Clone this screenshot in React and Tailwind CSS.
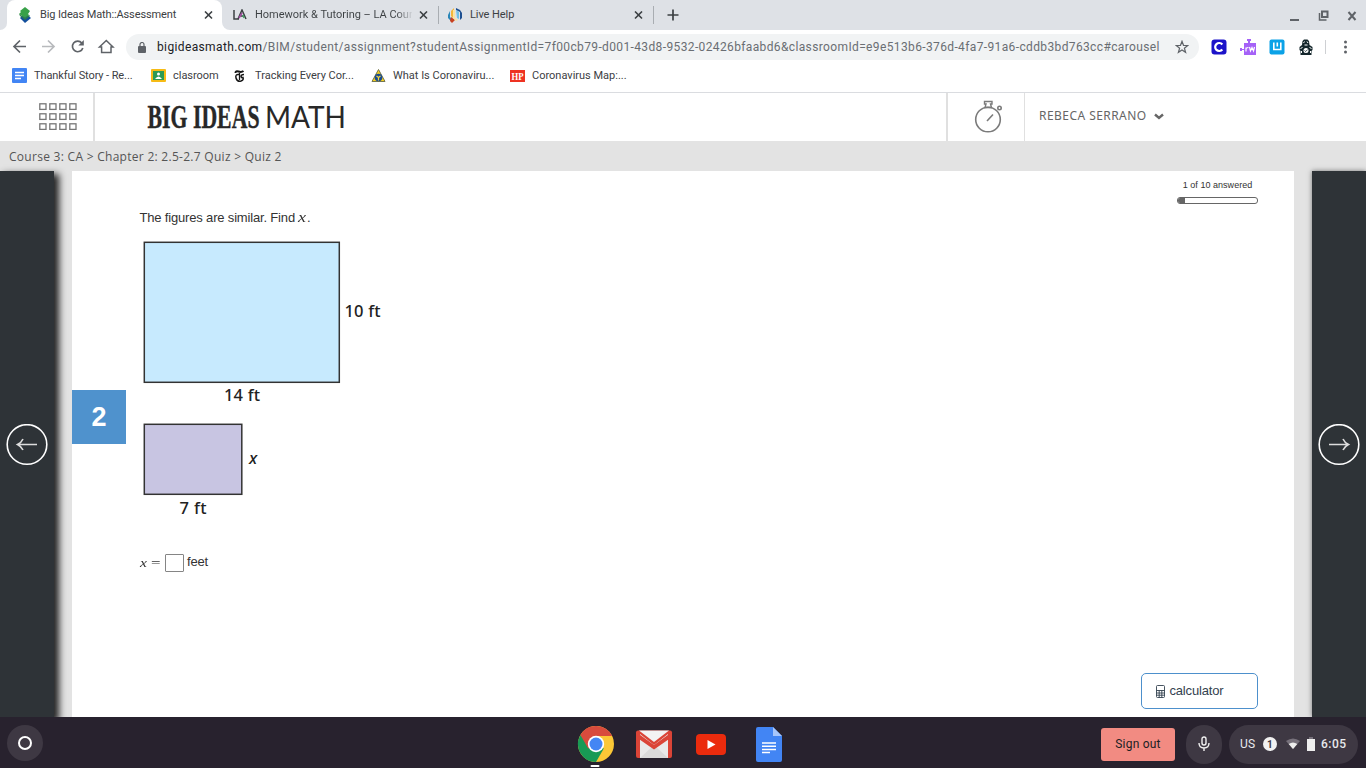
import React from "react";

const Close = ({ className = "" }) => (
  <svg className={"shrink-0 " + className} width="9" height="9" viewBox="0 0 9 9" stroke="#3c4043" strokeWidth="1.6">
    <path d="M1 .5l7 7M8 .5L1 7.500" />
  </svg>
);

const LiveIcon = () => (
  <svg width="14" height="15" viewBox="0 0 14 15" className="shrink-0">
    <path d="M3 3L6 0v3L5 10l-2-2z" fill="#f4b83c" />
    <path d="M2 3L0 7v3l3 3 1-1-2-3z" fill="#2a86b8" />
    <path d="M3 9l4 3-3 3-2-2z" fill="#c8401f" />
    <path d="M5 2h2v8l3 2-2 1-3-3z" fill="#fbe3a0" />
    <path d="M8 0l4 2 2 3v5l-2 2V4L8 2z" fill="#1d4f91" />
    <path d="M8 2l3 2v7L9 10z" fill="#6fc1e8" />
  </svg>
);

function TabStrip() {
  return (
    <div className="flex h-[30px] bg-[#dee1e6] text-[11px] text-[#3c4043]">
      <div className="flex w-[7px] bg-white"><div className="w-full rounded-br-lg bg-[#dee1e6]" /></div>
      <div className="w-[215px] bg-[#dee1e6]">
        <div className="flex h-full items-center rounded-t-lg bg-white pl-[11px]">
          <svg width="14" height="16" viewBox="0 0 14 16" className="shrink-0">
            <path d="M7 6l6 5-6 5-5-5z" fill="#134f9c" />
            <path d="M7 0l5 4-2 3 1 1-4 3-6-4 2-2-1-1z" fill="#38a148" />
            <path d="M1 7l6 4 4-3 1 1-5 4-5-4z" fill="#2c7c4c" />
          </svg>
          <div className="ml-2 w-[157px] whitespace-nowrap tracking-[-0.12px]">Big Ideas Math::Assessment</div>
          <Close className="ml-[7px]" />
        </div>
      </div>
      <div className="flex w-[217px] bg-white">
        <div className="flex w-full items-center rounded-bl-lg bg-[#dee1e6] pl-[11px]">
          <svg width="14" height="12" viewBox="0 0 14 12" fill="none" stroke="#3c4043" strokeWidth="1.5" className="shrink-0">
            <path d="M1 1v9h5" />
            <path d="M5 10l4-9 4 9M7 7h4" />
            <path d="M9 4l-3 5" stroke="#a14ca0" />
            <path d="M10 6l1 3" stroke="#46a567" />
          </svg>
          <div className="ml-2 w-[157px] overflow-hidden whitespace-nowrap bg-linear-to-r from-[#3c4043] from-90% to-[#3c4043]/10 bg-clip-text tracking-[-0.01px] text-transparent">Homework &amp; Tutoring – LA Coun</div>
          <Close className="ml-[7px]" />
          <div className="ml-[10px] h-[18px] w-px shrink-0 bg-[#a9adb2]" />
        </div>
      </div>
      <div className="flex w-[216px] items-center pl-[9px]">
        <LiveIcon />
        <div className="ml-2 w-[157px] tracking-[-0.08px]">Live Help</div>
        <Close className="ml-[7px]" />
        <div className="ml-[10px] h-[18px] w-px bg-[#a9adb2]" />
      </div>
      <div className="flex flex-1 items-center pl-[12px]">
        <svg width="12" height="12" viewBox="0 0 12 12" stroke="#3c4043" strokeWidth="1.7"><path d="M6 .5v11M.5 6h11" /></svg>
      </div>
      <div className="flex items-center pr-[8px] pt-px text-[#5f6368]">
        <svg width="68" height="12" viewBox="0 0 68 12" fill="none" stroke="#5f6368">
          <path d="M0 10h9" strokeWidth="2" />
          <path d="M32 1.500h5.500v5.500h-5.500z" strokeWidth="2" />
          <path d="M29.500 3v7h7" strokeWidth="1.500" />
          <path d="M58.500 2l7 8M65.500 2l-7 8" strokeWidth="2" />
        </svg>
      </div>
    </div>
  );
}

function Toolbar() {
  return (
    <div className="flex h-[34px] items-center">
      <svg width="106" height="16" viewBox="0 0 106 16" className="ml-[12px] shrink-0" fill="none" stroke="#5f6368" strokeWidth="1.7">
        <path d="M14 7.500H3M8 1.500l-6 6 6 6" />
        <path d="M30 7.500h11M36 1.500l6 6-6 6" stroke="#b8babd" />
        <path d="M69.800 4A5.300 5.300 0 1 0 70.800 9" />
        <path d="M71.800 1v5.500h-5.500z" fill="#5f6368" stroke="none" />
        <path d="M89.600 13.500V8H87.500L94.300 1.500 101 8h-2v5.500h-9.400z" strokeWidth="1.500" />
      </svg>
      <div className="ml-[8px] flex h-[26px] w-[1073px] shrink-0 items-center rounded-full bg-[#f1f3f4] pl-[12px]">
        <svg width="8" height="11" viewBox="0 0 8 11" className="shrink-0"><rect y="4" width="8" height="7" rx="1" fill="#5f6368" /><path d="M2 5V2.500a2 2 0 0 1 4 0V5" fill="none" stroke="#5f6368" strokeWidth="1.200" /></svg>
        <div className="ml-[11px] w-[1008px] whitespace-nowrap text-[12px] tracking-[0.37px] text-[#6a6e73]"><span className="text-[#202124]">bigideasmath.com</span>/BIM/student/assignment?studentAssignmentId=7f00cb79-d001-43d8-9532-02426bfaabd6&amp;classroomId=e9e513b6-376d-4fa7-91a6-cddb3bd763cc#carousel</div>
        <svg width="14" height="14" viewBox="0 0 14 14" className="ml-[10px] shrink-0" fill="none" stroke="#5f6368" strokeWidth="1.200"><path d="M7 1.300l1.500 4 4.200.2-3.300 2.700 1.200 4.100L7 10l-3.600 2.300 1.200-4.100-3.300-2.700 4.200-.2z" /></svg>
      </div>
      <svg width="150" height="18" viewBox="1206 38 150 18" className="ml-[7px] shrink-0">
        <rect x="1211.500" y="39.500" width="15" height="15" rx="3" fill="#1c13c9" />
        <path d="M1222.300 44.500a4 4 0 1 0 0 5" fill="none" stroke="#fff" strokeWidth="2.200" />
        <path d="M1244 43h4v-2h-1v-2h4v2h-1v2h6v12h-12v-5h-2v1h-2v-3h2v1h2z" fill="#a562f7" />
        <path d="M1246 51.500v-4M1246 48.500q1-1 2.500-1M1249.500 47l1 4 1.500-3.500 1.500 3.500 1-4" stroke="#fff" strokeWidth="1.200" fill="none" />
        <rect x="1269.500" y="39.500" width="15" height="15" rx="2" fill="#0ba2e7" />
        <path d="M1273.800 42.500v7h7v-7M1277.300 42.500v4" fill="none" stroke="#fff" strokeWidth="1.600" />
        <path d="M1302 45l.5-4 1.500-1.500h3.500l1.500 1.500.5 4 3 2v3l-1 1v4h-11v-4l-1-1v-3z" fill="#15272c" />
        <path d="M1303.500 43l1-1.500M1308 43l-1-1.500M1304.500 45h3M1300.500 49l2-2M1309.500 47l2 2M1301.500 51v2M1310.500 51v2" stroke="#fff" strokeWidth="1" />
        <circle cx="1306" cy="50.500" r="2.500" fill="#fff" />
        <path d="M1304.500 50.500l1.200 1 2-2" stroke="#15272c" fill="none" strokeWidth=".8" />
        <path d="M1325.500 40v14" stroke="#ced0d3" />
        <g fill="#5f6368"><circle cx="1345.500" cy="42" r="1.500" /><circle cx="1345.500" cy="47" r="1.500" /><circle cx="1345.500" cy="52" r="1.500" /></g>
      </svg>
    </div>
  );
}

function Bookmarks() {
  return (
    <div className="flex h-[29px] items-center border-b border-[#dadce0] pb-[5px] pl-[12px] text-[11px] text-[#3c4043] whitespace-nowrap">
      <div className="flex w-[139px] items-center gap-[7px]">
        <svg width="15" height="15" viewBox="0 0 15 15"><rect width="15" height="15" rx="1" fill="#4285f4" /><path d="M3 4.500h9M3 7.500h9M3 10.500h6" stroke="#fff" strokeWidth="1.300" /></svg>
        <span className="pt-px tracking-[-0.1px]">Thankful Story - Re...</span>
      </div>
      <div className="flex w-[82px] items-center gap-[7px]">
        <svg width="15" height="13" viewBox="0 0 15 13"><rect width="15" height="13" rx="1" fill="#f6bb15" /><rect x="2" y="2" width="11" height="9" fill="#2b9a55" /><circle cx="7.500" cy="5" r="1.500" fill="#fff" /><path d="M4 10q3.500-5 7 0z" fill="#fff" /></svg>
        <span className="pt-px tracking-[-0.02px]">clasroom</span>
      </div>
      <div className="flex w-[138px] items-center gap-[8px]">
        <svg width="14" height="14" viewBox="0 0 14 14" fill="none" stroke="#151515"><path d="M2.500 4q0-2.500 3-1.500t5-.5" strokeWidth="2" /><path d="M6 5.500Q2 5 3 9q1 4 5 3 3-1 2-3.500Q8.500 9 8 7.500 8 5.500 11 5.500" strokeWidth="1.500" /><path d="M6.500 4v7" strokeWidth="1.300" /></svg>
        <span className="pt-px">Tracking Every Cor...</span>
      </div>
      <div className="flex w-[139px] items-center gap-[7px]">
        <svg width="15" height="15" viewBox="0 0 15 15"><path d="M7.500 1.500l6.500 12H1z" fill="#f8cf1c" stroke="#747650" /><circle cx="7.500" cy="9.500" r="3.800" fill="#184a91" /><path d="M5.500 8l2 1.500 2-1.500M7.500 9.500v3" stroke="#f6d53b" strokeWidth="1.200" fill="none" /></svg>
        <span className="pt-px">What Is Coronaviru...</span>
      </div>
      <div className="flex items-center gap-[7px]">
        <svg width="15" height="12" viewBox="0 0 15 12"><rect width="15" height="12" fill="#ee3322" /><text x="1.500" y="9.500" fontFamily="Liberation Serif" fontWeight="700" fontSize="10.500" fill="#fff" textLength="12" lengthAdjust="spacingAndGlyphs">HP</text></svg>
        <span className="pt-px">Coronavirus Map:...</span>
      </div>
    </div>
  );
}

function SiteHeader() {
  const cols = [0, 1, 2, 3];
  return (
    <div className="flex h-[48px] bg-white">
      <div className="flex w-[95px] items-center border-r-2 border-[#e0e0e0] pb-px pl-[39px]">
        <svg width="38" height="27" viewBox="0 0 38 27" fill="none" stroke="#777" strokeWidth="1.300">
          {[0, 1, 2].map((r) => cols.map((c) => <rect key={r + "-" + c} x={c * 10 + 0.8} y={r * 10 + 0.8} width="6.200" height="5.600" />))}
        </svg>
      </div>
      <div className="flex flex-1 items-center pl-[52px]">
        <svg width="200" height="30" viewBox="0 0 200 30" fill="#282828">
          <text x="0.500" y="25.500" fontFamily="Liberation Serif" fontWeight="700" fontSize="33" stroke="#282828" strokeWidth=".4" textLength="112" lengthAdjust="spacingAndGlyphs">BIG IDEAS</text>
          <text x="118" y="25.500" fontFamily="Lato" fontSize="31" textLength="81" lengthAdjust="spacingAndGlyphs">MATH</text>
        </svg>
      </div>
      <div className="flex w-[79px] items-center border-r border-l-2 border-[#e0e0e0] pl-[26px]">
        <svg width="32" height="36" viewBox="0 0 32 36" fill="none" stroke="#7b7b7b" strokeWidth="1.600">
          <circle cx="14" cy="20.500" r="12.300" /><path d="M13 22l6-6.500" /><path d="M10.500 2.500h7.500v2.500h-1.500l1 3.500h-6.500l1-3.500h-1.500z" strokeWidth="1.400" /><circle cx="25.500" cy="9" r="1.700" />
        </svg>
      </div>
      <div className="flex w-[341px] items-center pl-[14px] text-[12px] text-[#666]">
        <span className="-mt-[2px] w-[108px] whitespace-nowrap font-['Noto_Sans'] tracking-[0.45px]">REBECA SERRANO</span>
        <svg width="10" height="7" viewBox="0 0 10 7" className="ml-[7px] -mt-px" fill="none" stroke="#666" strokeWidth="2.400"><path d="M1 1.500l4 3.500 4-3.500" /></svg>
      </div>
    </div>
  );
}

function Question() {
  return (
    <div className="relative w-[1222px] shrink-0 bg-white font-['Liberation_Sans'] text-[13px] text-[#333]">
      <div className="flex justify-between">
        <div className="pl-[67.500px] pt-[38px] leading-[18px] tracking-[-0.17px]">
          The figures are similar. Find <span className="inline-block origin-left scale-x-130 pr-[2.500px] font-['Liberation_Serif'] text-[14px] leading-[14px] italic">x</span>.
        </div>
        <div className="mr-[36px] w-[81px] pt-[8px]">
          <div className="text-center text-[9px] leading-[12px] tracking-[0.03px] whitespace-nowrap">1 of 10 answered</div>
          <div className="mt-[6px] h-[7px] overflow-hidden rounded-[3px] border border-[#666]"><div className="h-full w-[7px] bg-[#666]" /></div>
        </div>
      </div>
      <svg width="250" height="284" viewBox="140 238 250 284" className="mt-[11px] ml-[68px] block" fontFamily="Noto Sans" fontWeight="500" fontSize="16.500">
        <g stroke="#333" strokeWidth="1.500">
          <rect x="144.300" y="242.300" width="195" height="140" fill="#c7eafe" />
          <rect x="144.300" y="424.300" width="97.500" height="70" fill="#c8c5e2" />
        </g>
        <g fill="#222">
          <text x="344.500" y="317.200" textLength="36">10 ft</text>
          <text x="224" y="401" textLength="36">14 ft</text>
          <text x="179.500" y="513.500" textLength="27">7 ft</text>
          <text x="249" y="464" fontStyle="italic">x</text>
        </g>
      </svg>
      <div className="mt-[31px] ml-[68px] flex h-[19px] items-center">
        <span className="flex w-[25px] items-center whitespace-nowrap font-['Liberation_Serif'] text-[13px] leading-[13px]"><i className="w-[11px] origin-left scale-x-120">x</i><span className="origin-left scale-x-130">=</span></span>
        <div className="h-[18px] w-[19px] rounded-[1px] border border-[#858585]" />
        <span className="ml-[3px] -mt-[2px] tracking-[-0.15px]">feet</span>
      </div>
      <div className="absolute top-[219px] left-0 flex h-[54px] w-[54px] items-center justify-center bg-[#4f92cd] text-[27px] font-bold text-white">2</div>
      <div className="absolute right-[36px] bottom-[8px] flex h-[36px] w-[117px] items-center rounded-[5px] border border-[#4d90cc] pl-[14px] text-[13px] text-[#33424f]">
        <svg width="9" height="13" viewBox="0 0 9 13" fill="none" stroke="#33424f" strokeWidth=".9"><rect x=".5" y=".5" width="8" height="12" rx="1" /><path d="M.5 5.500h8M.5 8h8M.5 10.200h8M3.200 5.500v7M5.800 5.500v7" /></svg>
        <span className="ml-[4.500px] tracking-[-0.18px]">calculator</span>
      </div>
    </div>
  );
}

const SideArrow = ({ flip }) => (
  <svg width="42" height="42" viewBox="0 0 42 42" fill="none" stroke="#fff" className={"mt-px mr-px shrink-0 " + (flip ? "-scale-x-100" : "")}>
    <circle cx="21" cy="20.500" r="19.800" strokeWidth="1.600" />
    <path d="M31 20.500H12M17 15q-1.500 3.500-5.500 5.500 4 2 5.500 5.500" stroke="#ddd" strokeWidth="1.600" />
  </svg>
);

function Shelf() {
  return (
    <div className="flex h-[51px] items-center bg-[#28222e] text-[#e8eaed]">
      <div className="ml-[7px] mt-px flex h-9 w-9 items-center justify-center rounded-full bg-[#3e3843]"><div className="h-[14px] w-[14px] rounded-full border-2 border-white" /></div>
      <svg width="216" height="51" viewBox="570 717 216 51" className="ml-[527px] shrink-0">
        <g>
          <circle cx="596" cy="744" r="18" fill="#fbc736" />
          <path d="M596 744L580.400 735A18 18 0 0 0 596 762l7.800-13.500z" fill="#189a55" />
          <path d="M596 744v-8h16.100A18 18 0 0 0 580.400 735l7.800 13.500z" fill="#d84b3d" />
          <circle cx="596" cy="744" r="8.200" fill="#fff" /><circle cx="596" cy="744" r="6.500" fill="#4486f4" />
          <rect x="590.500" y="765" width="9" height="2" rx="1" fill="#fff" />
        </g>
        <rect x="636" y="730.500" width="36" height="27.500" rx="2" fill="#db4437" />
        <path d="M640 734l14 11 14-11v24h-28z" fill="#e9e9e9" />
        <path d="M640 758l14-13 14 13z" fill="#dadada" />
        <path d="M636 732l18 13 18-13v5l-18 12.500L636 737z" fill="#db4437" />
        <path d="M639 730.500h30l-15 11.500z" fill="#f3f3f3" />
        <rect x="696" y="734" width="30" height="21" rx="4" fill="#eb2b0d" /><path d="M707.500 740v9l8-4.500z" fill="#fff" />
        <path d="M756 729q0-2 2-2h15l9 9v24q0 2-2 2h-22q-2 0-2-2z" fill="#4285f4" /><path d="M773 727l9 9h-9z" fill="#a7c6fb" />
        <path d="M762 743h14M762 746.200h14M762 749.400h14M762 752.600h8" stroke="#fff" strokeWidth="1.500" />
      </svg>
      <div className="ml-[315px] mt-[3px] flex h-[33px] w-[74px] shrink-0 items-center justify-center rounded-[3px] bg-[#f28b82] text-[12px] tracking-[0.22px] text-[#202124]">Sign out</div>
      <div className="ml-[11px] mt-[3px] flex h-[39px] w-[36px] items-center justify-center rounded-full bg-[#3e3843]">
        <svg width="12" height="16" viewBox="0 0 12 16" fill="none" stroke="#f1f1f1" strokeWidth="1.400"><rect x="4" y="1" width="4" height="8" rx="2" /><path d="M1 7q0 5 5 5t5-5M6 12v3" /></svg>
      </div>
      <div className="ml-[7px] mt-[3px] flex h-[39px] w-[129px] items-center rounded-full bg-[#3e3843] pl-[11px] text-[12px] font-medium tracking-[0.1px]">
        <span className="w-[23px] font-normal">US</span>
        <div className="flex h-[14px] w-[14px] items-center justify-center rounded-full bg-[#f1f1f1] text-[10px] font-bold text-[#3e3843]">1</div>
        <svg width="30" height="15" viewBox="0 0 30 15" className="ml-[9px] mt-px"><path d="M0 4q7-5 14 0l-7 8z" fill="#77717b" /><path d="M2.700 7q4.300-3 8.600 0L7 12z" fill="#eee" /><path d="M23 0h4v2h-4z" fill="#77717b" /><path d="M21 2h8v12h-8z" fill="#eee" /></svg>
        <span className="ml-[5px] tracking-[0.5px]">6:05</span>
      </div>
    </div>
  );
}

export default function App() {
  return (
    <div className="flex h-[768px] w-[1366px] flex-col overflow-hidden bg-white font-[Roboto,sans-serif]">
      <TabStrip />
      <Toolbar />
      <Bookmarks />
      <SiteHeader />
      <div className="flex h-[576px] flex-col overflow-hidden bg-[#e3e3e3]">
        <div className="h-[30px] pl-[9px] pt-px font-['Open_Sans'] text-[12px] leading-[30px] tracking-[0.28px] text-[#555]">Course 3: CA &gt; Chapter 2: 2.5-2.7 Quiz &gt; Quiz 2</div>
        <div className="flex h-[546px]">
          <div className="mr-[18px] flex w-[54px] shrink-0 items-center justify-center bg-[#2e3337] shadow-[4px_4px_7px_1px_#222]"><SideArrow /></div>
          <Question />
          <div className="ml-[18px] flex w-[54px] shrink-0 items-center justify-center bg-[#2e3337] shadow-[0_0_5px_#777]"><SideArrow flip /></div>
        </div>
      </div>
      <Shelf />
    </div>
  );
}
